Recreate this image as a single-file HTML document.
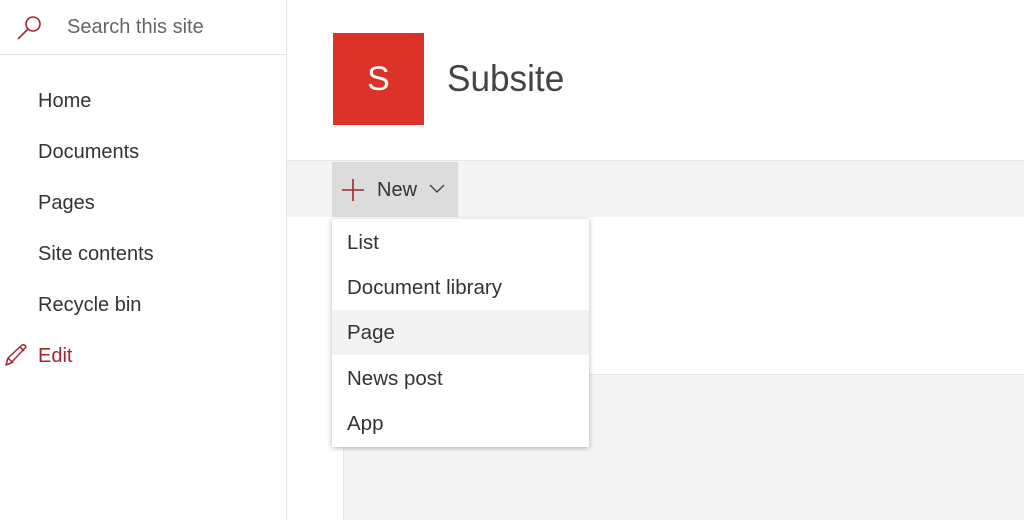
<!DOCTYPE html>
<html><head><meta charset="utf-8"><style>
*{margin:0;padding:0;box-sizing:border-box}
body{width:1024px;height:520px;overflow:hidden;background:#fff;font-family:"Liberation Sans",sans-serif;position:relative}
.abs{position:absolute}
.nav{font-size:20px;color:#333;left:38px}
.mi{position:absolute;left:0;width:257px;height:45px;line-height:46px;padding-left:15px;font-size:20.5px;color:#333}
</style></head><body>
<div class="abs" style="left:286px;top:0;width:1px;height:520px;background:#e6e6e6"></div>
<div class="abs" style="left:0;top:54px;width:286px;height:1px;background:#e6e6e6"></div>
<svg class="abs" style="left:16px;top:14px" width="28" height="26" viewBox="0 0 28 26"><circle cx="17" cy="10" r="7" fill="none" stroke="#a4262c" stroke-width="1.6"/><line x1="12" y1="15" x2="2" y2="25" stroke="#a4262c" stroke-width="1.6"/></svg>
<div class="abs" style="left:67px;top:16px;font-size:20px;color:#666">Search this site</div>
<div class="abs nav" style="top:90px">Home</div>
<div class="abs nav" style="top:141px">Documents</div>
<div class="abs nav" style="top:192px">Pages</div>
<div class="abs nav" style="top:243px">Site contents</div>
<div class="abs nav" style="top:294px">Recycle bin</div>
<svg class="abs" style="left:4px;top:343px" width="24" height="24" viewBox="0 0 24 24"><path d="M2 22 L4 15 L18 2 Q21 1 22 4 L20 6 L7 20 Z M4 15 L9 20 M16 4 L20 8" fill="none" stroke="#a4262c" stroke-width="1.5" stroke-linejoin="round"/></svg>
<div class="abs nav" style="top:345px;color:#a4262c">Edit</div>
<div class="abs" style="left:333px;top:33px;width:91px;height:92px;background:#dc3228"></div>
<div class="abs" style="left:333px;top:60px;width:91px;text-align:center;color:#fff;font-size:34px">S</div>
<div class="abs" style="left:447px;top:58px;font-size:37px;color:#444;transform:scaleX(0.95);transform-origin:left">Subsite</div>
<div class="abs" style="left:287px;top:160px;width:737px;height:57px;background:#f4f4f4;border-top:1px solid #e8e8e8"></div>
<div class="abs" style="left:332px;top:162px;width:126px;height:55px;background:#dcdcdc"></div>
<svg class="abs" style="left:341px;top:178px" width="24" height="24"><path d="M12 1V23M1 12H23" stroke="#a4262c" stroke-width="1.6"/></svg>
<div class="abs" style="left:377px;top:179px;font-size:20px;color:#333">New</div>
<svg class="abs" style="left:428px;top:183px" width="18" height="12"><path d="M2 2L9 9L16 2" fill="none" stroke="#444" stroke-width="1.4"/></svg>
<div class="abs" style="left:343px;top:374px;width:681px;height:146px;background:#f4f4f4;border-left:1px solid #e6e6e6;border-top:1px solid #e6e6e6"></div>
<div class="abs" style="left:332px;top:219px;width:257px;height:228px;background:#fff;box-shadow:0 1px 5px rgba(0,0,0,.3)">
<div class="mi" style="top:1px">List</div>
<div class="mi" style="top:46px">Document library</div>
<div class="mi" style="top:91px;background:#f3f3f3">Page</div>
<div class="mi" style="top:137px">News post</div>
<div class="mi" style="top:182px">App</div>
</div>
</body></html>
